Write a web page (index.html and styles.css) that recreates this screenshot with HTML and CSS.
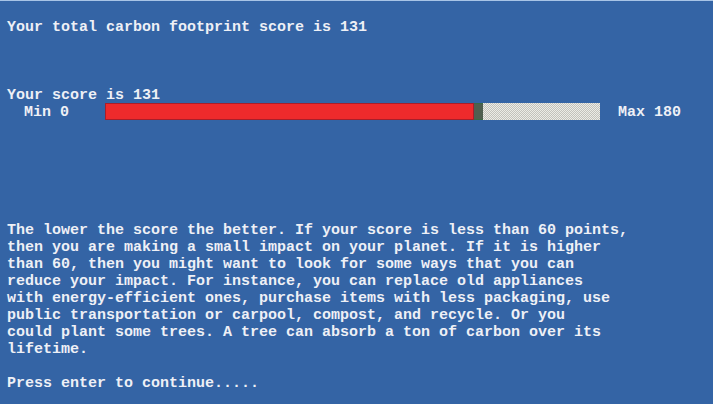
FILE: index.html
```html
<!DOCTYPE html>
<html>
<head>
<meta charset="utf-8">
<link rel="stylesheet" href="styles.css">
</head>
<body>
<div class="screen">
  <div class="line title">Your total carbon footprint score is 131</div>
  <div class="line score">Your score is 131</div>
  <div class="meter-row">
    <span class="min">Min 0</span>
    <div class="meter">
      <div class="fill" style="width: 369px"></div>
      <div class="marker"></div>
      <div class="rest"></div>
    </div>
    <span class="max">Max 180</span>
  </div>
  <div class="advice">The lower the score the better. If your score is less than 60 points,
then you are making a small impact on your planet. If it is higher
than 60, then you might want to look for some ways that you can
reduce your impact. For instance, you can replace old appliances
with energy-efficient ones, purchase items with less packaging, use
public transportation or carpool, compost, and recycle. Or you
could plant some trees. A tree can absorb a ton of carbon over its
lifetime.</div>
  <div class="line prompt">Press enter to continue.....</div>
</div>
</body>
</html>
```
FILE: styles.css
```css
html, body {
  margin: 0;
  padding: 0;
  height: 100%;
}
body {
  background: #3464a5;
  border-top: 1px solid #a8c4e6;
  box-sizing: border-box;
  overflow: hidden;
}
.screen {
  font-family: "Liberation Mono", "Courier New", monospace;
  font-weight: bold;
  font-size: 15px;
  line-height: 17px;
  color: #eef0f6;
  padding: 18px 0 0 7px;
}
.line {
  white-space: pre;
}
.score {
  margin-top: 51px;
}
.meter-row {
  display: flex;
  align-items: center;
  height: 17px;
}
.min {
  margin-left: 17px;
  width: 81px;
}
.meter {
  display: flex;
  width: 495px;
  height: 17px;
  margin-top: -3px;
}
.fill {
  background: #ee2a2c;
  border: 1px solid #a81e2a;
  box-sizing: border-box;
  height: 100%;
}
.marker {
  width: 9px;
  background: #4f5f50;
  border-top: 1px solid #3a6a45;
  border-bottom: 1px solid #3a6a45;
  box-sizing: border-box;
}
.rest {
  flex: 1;
  background: conic-gradient(#c2c2bc 25%, #ecece6 0 50%, #c2c2bc 0 75%, #ecece6 0) 0 0 / 2px 2px;
}
.max {
  margin-left: 18px;
}
.advice {
  white-space: pre;
  margin-top: 101px;
}
.prompt {
  margin-top: 17px;
}
```
